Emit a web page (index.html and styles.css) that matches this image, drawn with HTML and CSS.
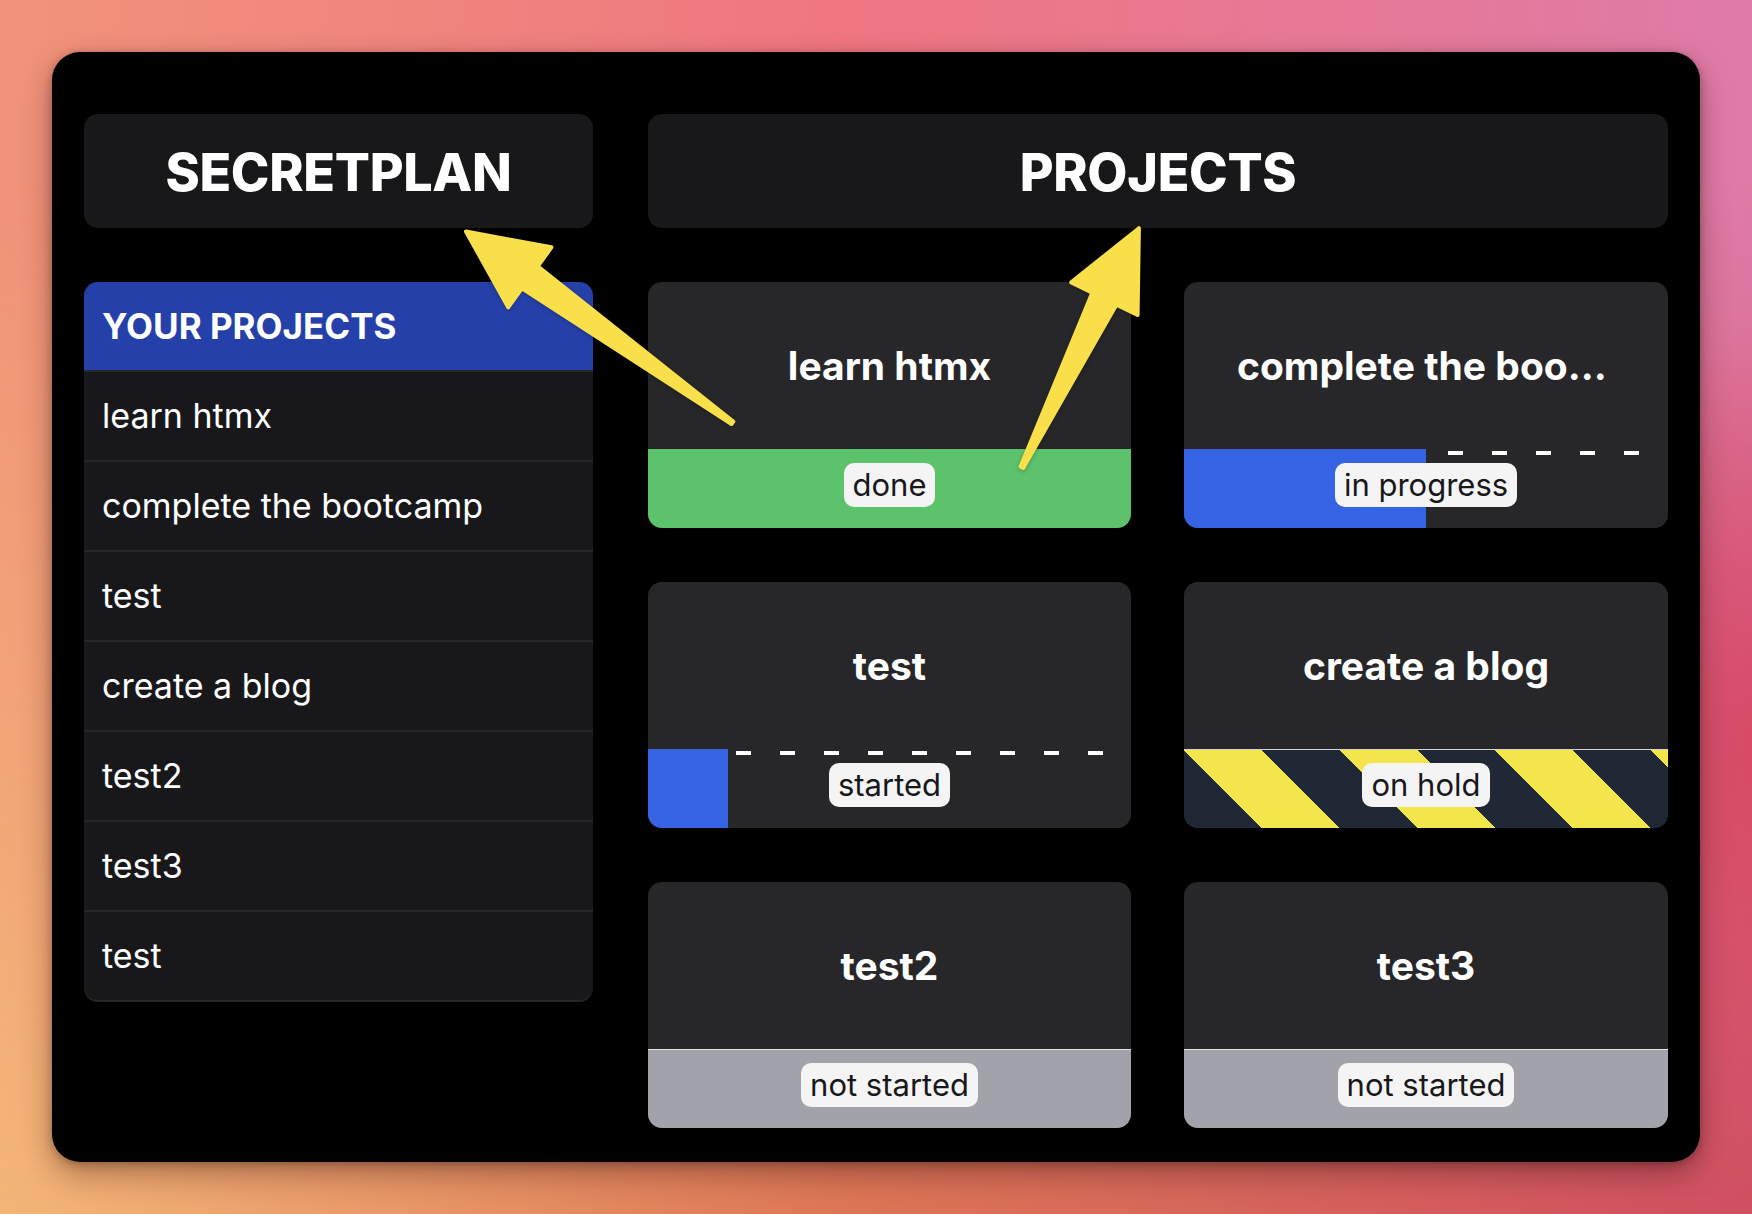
FILE: index.html
```html
<!DOCTYPE html>
<html lang="en">
<head>
<meta charset="utf-8">
<title>SecretPlan</title>
<link rel="stylesheet" href="styles.css">
</head>
<body>
<div class="window">
  <aside class="sidebar">
    <header class="brand"><h1>SECRETPLAN</h1></header>
    <nav class="plist">
      <div class="plist-head">YOUR PROJECTS</div>
      <ul>
        <li>learn htmx</li>
        <li>complete the bootcamp</li>
        <li>test</li>
        <li>create a blog</li>
        <li>test2</li>
        <li>test3</li>
        <li>test</li>
      </ul>
    </nav>
  </aside>
  <main class="main">
    <header class="brand"><h1>PROJECTS</h1></header>
    <section class="cards">
      <article class="card">
        <div class="card-title">learn htmx</div>
        <div class="status s-done"><span class="badge">done</span></div>
      </article>
      <article class="card">
        <div class="card-title">complete the bootcamp</div>
        <div class="status s-progress" style="--p:50%"><span class="badge">in progress</span></div>
      </article>
      <article class="card">
        <div class="card-title">test</div>
        <div class="status s-progress" style="--p:16.6%"><span class="badge">started</span></div>
      </article>
      <article class="card">
        <div class="card-title">create a blog</div>
        <div class="status s-hold"><span class="badge">on hold</span></div>
      </article>
      <article class="card">
        <div class="card-title">test2</div>
        <div class="status s-none"><span class="badge">not started</span></div>
      </article>
      <article class="card">
        <div class="card-title">test3</div>
        <div class="status s-none"><span class="badge">not started</span></div>
      </article>
    </section>
  </main>
</div>
<svg class="annot" width="1752" height="1214" viewBox="0 0 1752 1214" aria-hidden="true">
  <polygon class="arrow" points="466,231.5 551.4,247.3 537.7,266.3 733.3,421.6 731.5,424 521.9,288.3 508.2,307.3"/>
  <polygon class="arrow" points="1138.9,228.2 1137.6,315 1116.5,304.6 1023.2,467.9 1020.6,466.5 1092.3,292.8 1071.2,282.4"/>
</svg>
</body>
</html>
```
FILE: styles.css
```css
html, body {
  margin: 0;
  padding: 0;
}

body {
  width: 1752px;
  height: 1214px;
  overflow: hidden;
  position: relative;
  font-family: Inter, "Noto Sans", "Liberation Sans", sans-serif;
  background: linear-gradient(90deg, #f1937a 0%, #ef7681 48%, #df7ba8 100%);
}

body::before {
  content: "";
  position: absolute;
  inset: 0;
  background: linear-gradient(90deg, #f3b677 0%, #dc7655 48%, #cf4f60 100%);
  -webkit-mask-image: linear-gradient(to bottom, transparent 0%, transparent 15%, #000 100%);
  mask-image: linear-gradient(to bottom, transparent 0%, transparent 15%, #000 100%);
}

body::after {
  content: "";
  position: absolute;
  inset: 0;
  background: radial-gradient(ellipse 180px 420px at 100% 62%, rgba(216, 70, 100, 0.9), rgba(216, 70, 100, 0));
}

.window {
  position: relative;
  z-index: 1;
  margin: 52px 0 0 52px;
  width: 1648px;
  height: 1110px;
  box-sizing: border-box;
  padding: 62px 32px 34px 32px;
  background: #000;
  border-radius: 28px;
  display: grid;
  grid-template-columns: 509px 1020px;
  column-gap: 55px;
  align-items: start;
  box-shadow: 0 12px 30px rgba(40, 10, 10, 0.35), 0 2px 8px rgba(0, 0, 0, 0.25);
}

.sidebar,
.main {
  display: flex;
  flex-direction: column;
  gap: 54px;
}

.brand {
  height: 114px;
  background: #18181b;
  border-radius: 14px;
  display: flex;
  align-items: center;
  justify-content: center;
}

.brand h1 {
  margin: 0;
  padding-top: 4px;
  color: #fff;
  font-size: 52px;
  font-weight: 800;
  line-height: 1.2;
  letter-spacing: -0.3px;
}

.plist {
  background: #18181b;
  border-radius: 14px;
  overflow: hidden;
  border-bottom: 2px solid #27272a;
}

.plist-head {
  background: #2541a9;
  color: #fff;
  font-size: 35px;
  font-weight: 700;
  line-height: 42px;
  padding: 23px 18px;
}

.plist ul {
  list-style: none;
  margin: 0;
  padding: 0;
}

.plist li {
  border-top: 2px solid #27272a;
  color: #fff;
  font-size: 34px;
  line-height: 42px;
  padding: 23px 18px;
}

.cards {
  display: grid;
  grid-template-columns: 483px 484px;
  grid-auto-rows: 246px;
  column-gap: 53px;
  row-gap: 54px;
}

.card {
  background: #27272a;
  border-radius: 14px;
  overflow: hidden;
  display: flex;
  flex-direction: column;
}

.card-title {
  height: 167px;
  line-height: 167px;
  padding: 0 53px;
  color: #fff;
  font-size: 39px;
  font-weight: 700;
  text-align: center;
  white-space: nowrap;
  overflow: hidden;
  text-overflow: ellipsis;
}

.status {
  flex: 1;
  box-sizing: border-box;
  padding-top: 14px;
  display: flex;
  justify-content: center;
  align-items: flex-start;
}

.badge {
  background: #f4f4f5;
  color: #18181b;
  font-size: 31px;
  line-height: 38px;
  padding: 3px 9px;
  border-radius: 10px;
}

.s-done {
  background: #5cc26b;
}

.s-progress {
  background:
    linear-gradient(#3563e3, #3563e3) 0 0 / var(--p) 100% no-repeat,
    repeating-linear-gradient(90deg, #fff 0 15px, transparent 15px 44px) 0 2px / 100% 4px no-repeat,
    #27272a;
}

.s-hold {
  background: repeating-linear-gradient(45deg, #202836 0 55px, #f3e64c 55px 110px);
  box-shadow: inset 0 1px 0 #d4d4d8;
}

.s-none {
  background: #a2a2aa;
  box-shadow: inset 0 1px 0 #e4e4e7;
}

.annot {
  position: absolute;
  left: 0;
  top: 0;
  z-index: 2;
  pointer-events: none;
  filter: drop-shadow(0 1px 2px rgba(0, 0, 0, 0.25));
}

.arrow {
  fill: #f9e04b;
  stroke: #f9e04b;
  stroke-width: 4;
  stroke-linejoin: round;
}
```
